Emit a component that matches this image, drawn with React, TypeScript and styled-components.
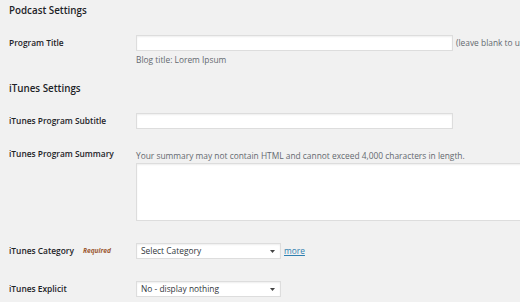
import styled, { createGlobalStyle } from "styled-components";

const GlobalStyle = createGlobalStyle`
  html, body {
    margin: 0;
    padding: 0;
    background: #f1f1f1;
    overflow: hidden;
  }
  body {
    font-family: "Open Sans", "Liberation Sans", sans-serif;
    color: #23282d;
  }
`;

const Page = styled.main`
  width: 520px;
  height: 302px;
  padding: 4px 0 0 8px;
  box-sizing: border-box;
  overflow: hidden;
`;

const SectionTitle = styled.h3<{ $gap?: number }>`
  margin: ${(p) => p.$gap ?? 0}px 0 0 1px;
  font-size: 9.8px;
  font-weight: 600;
  line-height: 14px;
  color: #1d2327;
`;

const Row = styled.div<{ $gap: number }>`
  display: grid;
  grid-template-columns: 128px auto;
  align-items: start;
  margin-top: ${(p) => p.$gap}px;
`;

const Label = styled.label<{ $lh?: number }>`
  display: flex;
  align-items: center;
  gap: 9px;
  padding-left: 1px;
  font-size: 8.4px;
  font-weight: 600;
  line-height: ${(p) => p.$lh ?? 16}px;
  color: #1d2327;
  white-space: nowrap;
`;

const Required = styled.span`
  font-size: 6.6px;
  font-style: italic;
  font-weight: 700;
  color: #9c5a33;
`;

const Field = styled.div`
  display: flex;
  flex-direction: column;
  align-items: flex-start;
`;

const Inline = styled.div`
  display: flex;
  align-items: center;
  gap: 3px;
  white-space: nowrap;
`;

const TextInput = styled.input`
  width: 317px;
  height: 16px;
  box-sizing: border-box;
  margin: 0;
  border: 1px solid #ddd;
  background: #fff;
  box-shadow: inset 0 1px 2px rgba(0, 0, 0, 0.07);
  outline: none;
`;

const TextArea = styled.textarea`
  width: 420px;
  height: 58px;
  box-sizing: border-box;
  margin: 0;
  border: 1px solid #ddd;
  background: #fff;
  box-shadow: inset 0 1px 2px rgba(0, 0, 0, 0.07);
  resize: none;
  outline: none;
`;

const Note = styled.span<{ $mt?: number }>`
  margin-top: ${(p) => p.$mt ?? 0}px;
  font-size: 8.4px;
  line-height: 14px;
  color: #646970;
  white-space: nowrap;
`;

const SelectBox = styled.div`
  position: relative;
  width: 145px;
  height: 16px;
  box-sizing: border-box;
  border: 1px solid #ddd;
  background: #fff;
  box-shadow: inset 0 1px 2px rgba(0, 0, 0, 0.07);
  padding-left: 4px;
  font-size: 8.4px;
  line-height: 14px;
  color: #32373c;
`;

const Arrow = styled.svg`
  position: absolute;
  right: 5px;
  top: 6px;
`;

const MoreLink = styled.a`
  font-size: 8.4px;
  line-height: 14px;
  color: #2f7fb0;
  text-decoration: underline;
`;

const Select = ({ value }: { value: string }) => (
  <SelectBox>
    {value}
    <Arrow width="5" height="3" viewBox="0 0 5 3">
      <path d="M0 0 H5 L2.5 3 Z" fill="#444" />
    </Arrow>
  </SelectBox>
);

export default function App() {
  return (
    <>
      <GlobalStyle />
      <Page>
        <SectionTitle>Podcast Settings</SectionTitle>

        <Row $gap={17}>
          <Label>Program Title</Label>
          <Field>
            <Inline>
              <TextInput />
              <Note>(leave blank to use</Note>
            </Inline>
            <Note $mt={2}>Blog title: Lorem Ipsum</Note>
          </Field>
        </Row>

        <SectionTitle $gap={15}>iTunes Settings</SectionTitle>

        <Row $gap={17}>
          <Label>iTunes Program Subtitle</Label>
          <Field>
            <TextInput />
          </Field>
        </Row>

        <Row $gap={20}>
          <Label $lh={10}>iTunes Program Summary</Label>
          <Field>
            <Note>
              Your summary may not contain HTML and cannot exceed 4,000 characters in length.
            </Note>
            <TextArea />
          </Field>
        </Row>

        <Row $gap={22}>
          <Label>
            iTunes Category <Required>Required</Required>
          </Label>
          <Inline>
            <Select value="Select Category" />
            <MoreLink href="#">more</MoreLink>
          </Inline>
        </Row>

        <Row $gap={22}>
          <Label>iTunes Explicit</Label>
          <Field>
            <Select value="No - display nothing" />
          </Field>
        </Row>
      </Page>
    </>
  );
}
